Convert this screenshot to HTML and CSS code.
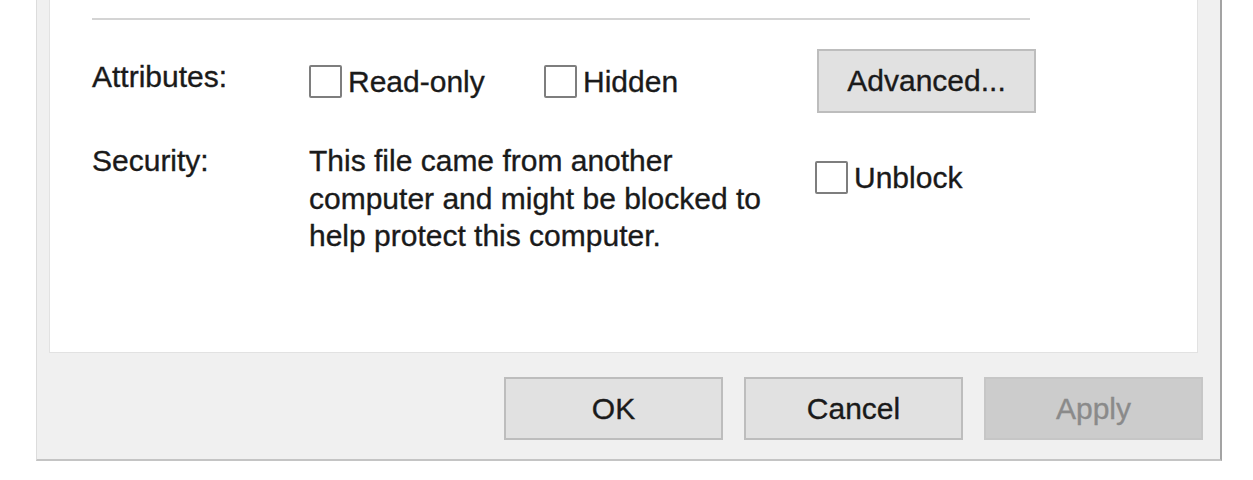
FILE: index.html
```html
<!DOCTYPE html>
<html lang="en">
<head>
<meta charset="utf-8">
<title>Properties</title>
<link rel="stylesheet" href="styles.css">
</head>
<body>
<div class="dialog">
  <div class="panel">
    <div class="sep"></div>
    <div class="grid">
      <div class="label attr-label">Attributes:</div>
      <div class="checks">
        <label class="check"><span class="box"></span><span>Read-only</span></label>
        <label class="check"><span class="box"></span><span>Hidden</span></label>
      </div>
      <button class="btn adv" type="button">Advanced...</button>
      <div class="label">Security:</div>
      <p class="desc">This file came from another<br>computer and might be blocked to<br>help protect this computer.</p>
      <label class="check unblock"><span class="box"></span><span>Unblock</span></label>
    </div>
  </div>
  <div class="footer">
    <button class="btn" type="button">OK</button>
    <button class="btn" type="button">Cancel</button>
    <button class="btn disabled" type="button">Apply</button>
  </div>
</div>
</body>
</html>
```
FILE: styles.css
```css
* { box-sizing: border-box; }
html, body {
  margin: 0;
  padding: 0;
  background: #ffffff;
}
body {
  font-family: "Liberation Sans", Arial, sans-serif;
  font-size: 30px;
  line-height: 37.5px;
  color: #1a1a1a;
  -webkit-text-stroke: 0.35px #1a1a1a;
}
.dialog {
  margin-left: 36px;
  width: 1186px;
  height: 461px;
  background: #f0f0f0;
  border-left: 1px solid #dcdcdc;
  border-right: 2px solid #a3a3a3;
  border-bottom: 2px solid #c4c4c4;
  padding: 0 0 0 12px;
  display: flex;
  flex-direction: column;
}
.panel {
  height: 353px;
  margin-right: 22px;
  background: #ffffff;
  border: 1px solid #e2e2e2;
  border-top: none;
  padding-top: 18px;
}
.sep {
  margin-left: 42px;
  width: 938px;
  height: 2px;
  background: #d4d4d4;
}
.grid {
  margin: 29px 0 0 42px;
  display: grid;
  grid-template-columns: 217px 507px 219px;
  row-gap: 29px;
  align-items: start;
}
.label { white-space: nowrap; }
.attr-label { margin-top: 9px; }
.checks {
  margin-top: 14px;
  display: grid;
  grid-template-columns: 235px auto;
}
.check {
  display: flex;
  align-items: center;
  gap: 6px;
  white-space: nowrap;
}
.box {
  width: 33px;
  height: 33px;
  flex: none;
  background: #ffffff;
  border: 2px solid #7e7e7e;
  border-radius: 2px;
}
.unblock { margin-top: 17px; margin-left: -1px; }
.desc { margin: 0; white-space: nowrap; }
.btn {
  font: inherit;
  color: #1a1a1a;
  width: 219px;
  height: 64px;
  padding: 0;
  background: #e1e1e1;
  border: 2px solid #bdbdbd;
  border-radius: 0;
  text-align: center;
}
.adv { margin-left: 1px; }
.footer {
  display: flex;
  justify-content: flex-end;
  gap: 21px;
  padding: 24px 17px 0 0;
}
.footer .btn { height: 63px; }
.btn.disabled {
  background: #cccccc;
  border-color: #c6c6c6;
  color: #8a8a8a;
  -webkit-text-stroke: 0.35px #8a8a8a;
}
```
